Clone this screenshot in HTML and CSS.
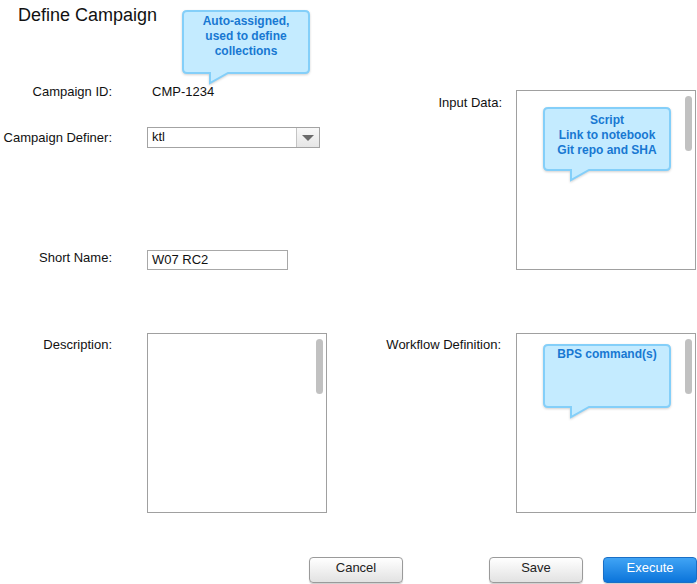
FILE: index.html
```html
<!DOCTYPE html>
<html>
<head>
<meta charset="utf-8">
<link rel="stylesheet" href="styles.css">
</head>
<body>
<div class="page">
  <header class="header">
    <h1 class="title">Define Campaign</h1>
    <div class="callout callout-id">
      <svg class="callout-shape" width="128" height="76" viewBox="0 0 128 76"><path d="M5,1 H123 Q127,1 127,5 V59 Q127,63 123,63 H46 L28,73 V63 H5 Q1,63 1,59 V5 Q1,1 5,1 Z"/></svg>
      <div class="callout-text">Auto-assigned,<br>used to define<br>collections</div>
    </div>
  </header>
  <main class="form">
    <section class="col col-left">
      <div class="row row-id">
        <label class="label">Campaign ID:</label>
        <span class="value">CMP-1234</span>
      </div>
      <div class="row row-definer">
        <label class="label">Campaign Definer:</label>
        <div class="select">
          <span class="select-value">ktl</span>
          <span class="select-btn"><span class="tri"></span></span>
        </div>
      </div>
      <div class="row row-short">
        <label class="label">Short Name:</label>
        <div class="input">W07 RC2</div>
      </div>
      <div class="row row-desc">
        <label class="label">Description:</label>
        <div class="textarea"><span class="thumb"></span></div>
      </div>
    </section>
    <section class="col col-right">
      <div class="row row-input">
        <label class="label">Input Data:</label>
        <div class="textarea">
          <span class="thumb"></span>
          <div class="callout callout-input">
            <svg class="callout-shape" width="128" height="76" viewBox="0 0 128 76"><path d="M5,1 H123 Q127,1 127,5 V59 Q127,63 123,63 H46 L28,73 V63 H5 Q1,63 1,59 V5 Q1,1 5,1 Z"/></svg>
            <div class="callout-text">Script<br>Link to notebook<br>Git repo and SHA</div>
          </div>
        </div>
      </div>
      <div class="row row-workflow">
        <label class="label">Workflow Definition:</label>
        <div class="textarea">
          <span class="thumb"></span>
          <div class="callout callout-workflow">
            <svg class="callout-shape" width="128" height="76" viewBox="0 0 128 76"><path d="M5,1 H123 Q127,1 127,5 V59 Q127,63 123,63 H46 L28,73 V63 H5 Q1,63 1,59 V5 Q1,1 5,1 Z"/></svg>
            <div class="callout-text">BPS command(s)</div>
          </div>
        </div>
      </div>
    </section>
  </main>
  <footer class="actions">
    <button class="btn btn-cancel">Cancel</button>
    <button class="btn btn-save">Save</button>
    <button class="btn btn-primary">Execute</button>
  </footer>
</div>
</body>
</html>
```

FILE: styles.css
```css
html, body {
  margin: 0;
  padding: 0;
  background: #fff;
}
body {
  font-family: "Liberation Sans", Arial, Helvetica, sans-serif;
  font-size: 13px;
  color: #111;
}
.page {
  position: relative;
  width: 697px;
  height: 584px;
  overflow: hidden;
}
.header {
  height: 84px;
  box-sizing: border-box;
  padding: 4px 0 0 18px;
}
.title {
  margin: 0;
  font-size: 18px;
  font-weight: normal;
  line-height: 22px;
  color: #111;
}

/* callouts */
.callout {
  position: absolute;
  width: 128px;
  height: 64px;
  box-sizing: border-box;
}
.callout-shape {
  position: absolute;
  left: 0;
  top: 0;
  overflow: visible;
  filter: drop-shadow(0 1px 1px rgba(0, 0, 0, 0.18));
}
.callout-shape path {
  fill: #c4ebff;
  stroke: #84cff9;
  stroke-width: 2;
}
.callout-text {
  position: relative;
  padding-top: 4px;
  text-align: center;
  font-size: 12px;
  font-weight: bold;
  line-height: 15px;
  color: #1878d2;
}
.callout-id {
  left: 182px;
  top: 10px;
}
.callout-input {
  left: 26px;
  top: 16px;
}
.callout-input .callout-text {
  padding-top: 6px;
}
.callout-workflow {
  left: 26px;
  top: 10px;
}
.callout-workflow .callout-text {
  padding-top: 3px;
}

/* form */
.form {
  display: flex;
}
.col {
  display: flex;
  flex-direction: column;
}
.col-left {
  width: 327px;
}
.col-right {
  width: 370px;
}
.row {
  display: grid;
  align-items: start;
}
.col-left .row {
  grid-template-columns: 112px 180px;
  column-gap: 35px;
}
.col-right .row {
  grid-template-columns: 176px 180px;
  column-gap: 13px;
}
.label {
  text-align: right;
  line-height: 16px;
  white-space: nowrap;
}
.value {
  padding-left: 5px;
  line-height: 16px;
}
.row-id {
  height: 16px;
}
.row-definer {
  margin-top: 27px;
}
.row-definer .label {
  padding-top: 3px;
}
.row-short {
  margin-top: 102px;
}
.row-desc {
  margin-top: 63px;
}
.row-desc .label {
  padding-top: 4px;
}
.row-input {
  margin-top: 6px;
}
.row-input .label {
  padding-top: 5px;
  padding-right: 1px;
}
.row-workflow {
  margin-top: 63px;
}
.row-workflow .label {
  padding-top: 4px;
  padding-right: 2px;
}

.select {
  display: flex;
  width: 173px;
  height: 21px;
  box-sizing: border-box;
  border: 1px solid #a3a3a3;
  background: #fff;
}
.select-value {
  flex: 1;
  padding-left: 4px;
  line-height: 18px;
}
.select-btn {
  width: 22px;
  display: flex;
  align-items: center;
  justify-content: center;
  border-left: 1px solid #c4c4c4;
  background: linear-gradient(#f8f8f8, #e6e6e6);
}
.tri {
  width: 0;
  height: 0;
  border-left: 6px solid transparent;
  border-right: 6px solid transparent;
  border-top: 6px solid #6a6a6a;
}
.input {
  width: 141px;
  height: 20px;
  box-sizing: border-box;
  border: 1px solid #a8a8a8;
  padding-left: 4px;
  line-height: 18px;
}
.textarea {
  position: relative;
  width: 180px;
  height: 180px;
  box-sizing: border-box;
  border: 1px solid #a0a0a0;
  background: #fff;
}
.thumb {
  position: absolute;
  right: 3px;
  top: 5px;
  width: 7px;
  height: 55px;
  border-radius: 4px;
  background: #c1c1c1;
}

/* actions */
.actions {
  display: flex;
  margin-top: 44px;
  padding-left: 309px;
}
.btn {
  width: 94px;
  height: 26px;
  box-sizing: border-box;
  border: 1px solid #9a9a9a;
  border-radius: 4px;
  font-family: inherit;
  font-size: 13px;
  line-height: 16px;
  color: #222;
  background: linear-gradient(#ffffff, #e2e2e2);
  box-shadow: 0 1px 1px rgba(0, 0, 0, 0.2);
  padding: 0 0 5px;
}
.btn-save {
  margin-left: 86px;
}
.btn-primary {
  margin-left: 20px;
  color: #fff;
  border-color: #1a6fc6;
  background: linear-gradient(#40a4f5, #0b74da);
}
```
